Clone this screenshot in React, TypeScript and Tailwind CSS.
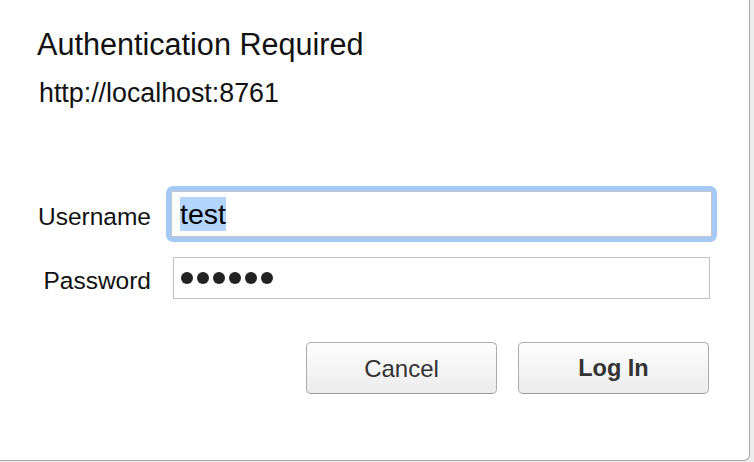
export default function App() {
  return (
    <div className="w-[754px] h-[462px] bg-[#ececec] overflow-hidden font-['Liberation_Sans',Arial,sans-serif]">
      <div className="w-[750px] h-[461px] bg-white border-r border-b border-[#a8a8a8] rounded-br-[6px] pl-[37px] pt-[29px]">
        <h1 className="text-[30.6px] leading-[30px] text-[#111]">Authentication Required</h1>
        <p className="mt-[21px] ml-[2px] text-[26.8px] leading-[27px] text-[#111]">http://localhost:8761</p>

        <div className="mt-[79px] flex items-start">
          <label className="w-[114px] pt-[19px] text-right text-[24.5px] leading-[24.5px] text-[#111]">Username</label>
          <div className="ml-[15px] w-[551px] h-[56px] p-[5px] rounded-[7px] bg-[#a4c9f6]">
            <div className="h-full w-full bg-white border border-[#c6c6c6] pl-[8px] flex items-center">
              <span className="inline-block bg-[#b3d5fd] text-[28.5px] leading-[34px] text-black">test</span>
            </div>
          </div>
        </div>

        <div className="mt-[15px] flex items-start">
          <label className="w-[114px] pt-[12px] text-right text-[24.5px] leading-[24.5px] text-[#111]">Password</label>
          <div className="ml-[22px] w-[537px] h-[42px] bg-white border border-[#c2c2c2] pl-[7px] flex items-center gap-[4px]">
            {[0, 1, 2, 3, 4, 5].map((i) => (
              <span key={i} className="w-[12px] h-[12px] rounded-full bg-[#222]" />
            ))}
          </div>
        </div>

        <div className="mt-[43px] ml-[269px] flex gap-[21px]">
          <button className="w-[191px] h-[52px] rounded-[5px] border border-[#acacac] border-b-[#999] bg-gradient-to-b from-[#fdfdfd] to-[#ececec] text-[24px] leading-none text-[#333] flex items-center justify-center">
            <span className="mt-[2px]">Cancel</span>
          </button>
          <button className="w-[191px] h-[52px] rounded-[5px] border border-[#acacac] border-b-[#999] bg-gradient-to-b from-[#fdfdfd] to-[#ececec] text-[23.5px] leading-none font-bold text-[#333] flex items-center justify-center">
            <span className="mt-[2px]">Log In</span>
          </button>
        </div>
      </div>
    </div>
  )
}
